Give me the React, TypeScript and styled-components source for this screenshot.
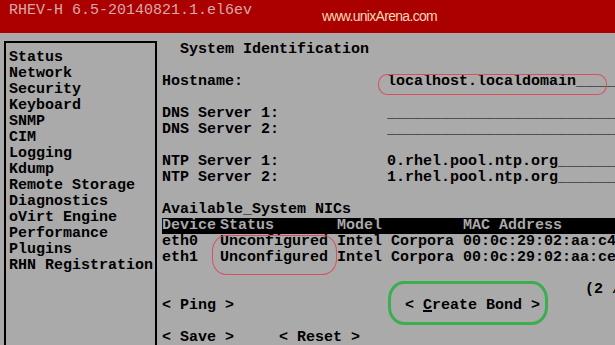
import React from "react";
import styled, { createGlobalStyle } from "styled-components";

const Global = createGlobalStyle`
  html, body { margin: 0; padding: 0; background: #aaaaaa; overflow: hidden; }
`;

const Screen = styled.div`
  position: relative;
  width: 615px;
  height: 345px;
  overflow: hidden;
  background: #aaaaaa;
  color: #000;
  font-family: "Liberation Mono", "DejaVu Sans Mono", monospace;
  font-size: 15px;
  line-height: 16px;
  font-weight: bold;
  display: flex;
  flex-direction: column;
`;

const Header = styled.header`
  height: 33px;
  flex: none;
  background: #ab0000;
  display: flex;
  align-items: flex-start;
`;

const Title = styled.div`
  padding: 3px 0 0 9px;
  height: 16px;
  white-space: pre;
  font-weight: normal;
  color: #d9a9a9;
`;

const Watermark = styled.div`
  margin: 7px 0 0 70px;
  font-family: "Liberation Sans", Arial, sans-serif;
  font-weight: normal;
  font-size: 14px;
  letter-spacing: -0.7px;
  line-height: 18px;
  color: #f6d8b8;
`;

const Body = styled.div`
  flex: 1;
  display: flex;
  min-height: 0;
`;

const Sidebar = styled.nav`
  flex: none;
  width: 146px;
  margin: 8px 0 0 4px;
  border: 2px solid #000;
  border-bottom: none;
  padding: 7px 0 0 3px;
  box-sizing: content-box;
`;

const Line = styled.div`
  height: 16px;
  white-space: pre;
  overflow: hidden;
`;

const Main = styled.main`
  flex: 1;
  min-width: 0;
  margin: 9px 0 0 5px;
  overflow: hidden;
`;

const Field = styled.div`
  height: 16px;
  display: grid;
  grid-template-columns: 225px 1fr;
  white-space: pre;
  overflow: hidden;
`;

const Value = styled.span`
  overflow: hidden;
`;

const TableRow = styled.div<{ $head?: boolean }>`
  height: 16px;
  display: grid;
  grid-template-columns: 58px 117px 126px 1fr;
  white-space: pre;
  overflow: hidden;
  background: ${(p) => (p.$head ? "#000" : "transparent")};
  color: ${(p) => (p.$head ? "#aaaaaa" : "#000")};
`;

const ButtonRow = styled.div<{ $second?: number }>`
  height: 16px;
  display: grid;
  grid-template-columns: ${(p) => p.$second}px 1fr;
  white-space: pre;
  overflow: hidden;
`;

const Hotkey = styled.span`
  text-decoration: underline;
  text-underline-offset: 1px;
  text-decoration-thickness: 2px;
`;

const Ring = styled.div<{ $color: string; $w: number }>`
  position: absolute;
  box-sizing: border-box;
  border: ${(p) => p.$w}px solid ${(p) => p.$color};
  pointer-events: none;
`;

const HostRing = styled(Ring)`
  left: 378px;
  top: 74px;
  width: 229px;
  height: 21px;
  border-radius: 9px / 10px;
`;

const StatusRing = styled(Ring)`
  left: 212px;
  top: 235px;
  width: 125px;
  height: 40px;
  border-radius: 14px / 16px;
`;

const BondRing = styled(Ring)`
  left: 388px;
  top: 281px;
  width: 160px;
  height: 44px;
  border-radius: 16px / 18px;
`;

const menu = [
  "Status",
  "Network",
  "Security",
  "Keyboard",
  "SNMP",
  "CIM",
  "Logging",
  "Kdump",
  "Remote Storage",
  "Diagnostics",
  "oVirt Engine",
  "Performance",
  "Plugins",
  "RHN Registration",
];

const fill = (s: string) => s + "_".repeat(60);

const nics = [
  ["eth0", "Unconfigured", "Intel Corpora", "00:0c:29:02:aa:c4"],
  ["eth1", "Unconfigured", "Intel Corpora", "00:0c:29:02:aa:ce"],
];

export default function App() {
  return (
    <>
      <Global />
      <Screen>
        <Header>
          <Title>RHEV-H 6.5-20140821.1.el6ev</Title>
          <Watermark>www.unixArena.com</Watermark>
        </Header>
        <Body>
          <Sidebar>
            {menu.map((m) => (
              <Line key={m}>{m}</Line>
            ))}
          </Sidebar>
          <Main>
            <Line>{"  System Identification"}</Line>
            <Line />
            <Field>
              <span>Hostname:</span>
              <Value>{fill("localhost.localdomain")}</Value>
            </Field>
            <Line />
            <Field>
              <span>DNS Server 1:</span>
              <Value>{fill("")}</Value>
            </Field>
            <Field>
              <span>DNS Server 2:</span>
              <Value>{fill("")}</Value>
            </Field>
            <Line />
            <Field>
              <span>NTP Server 1:</span>
              <Value>{fill("0.rhel.pool.ntp.org")}</Value>
            </Field>
            <Field>
              <span>NTP Server 2:</span>
              <Value>{fill("1.rhel.pool.ntp.org")}</Value>
            </Field>
            <Line />
            <Line>Available_System NICs</Line>
            <TableRow $head>
              <span>Device</span>
              <span>Status</span>
              <span>Model</span>
              <span>{"MAC Address"}</span>
            </TableRow>
            {nics.map((n) => (
              <TableRow key={n[0]}>
                <span>{n[0]}</span>
                <span>{n[1]}</span>
                <span>{n[2]}</span>
                <span>{n[3]}</span>
              </TableRow>
            ))}
            <Line />
            <Line>{" ".repeat(47) + "(2 / 2)"}</Line>
            <ButtonRow $second={243}>
              <span>{"< Ping >"}</span>
              <span>
                {"< "}
                <Hotkey>C</Hotkey>
                {"reate Bond >"}
              </span>
            </ButtonRow>
            <Line />
            <ButtonRow $second={117}>
              <span>{"< Save >"}</span>
              <span>{"< Reset >"}</span>
            </ButtonRow>
          </Main>
        </Body>
        <HostRing $color="#d8505f" $w={1.5} />
        <StatusRing $color="#d8505f" $w={1.5} />
        <BondRing $color="#3aae50" $w={3} />
      </Screen>
    </>
  );
}
